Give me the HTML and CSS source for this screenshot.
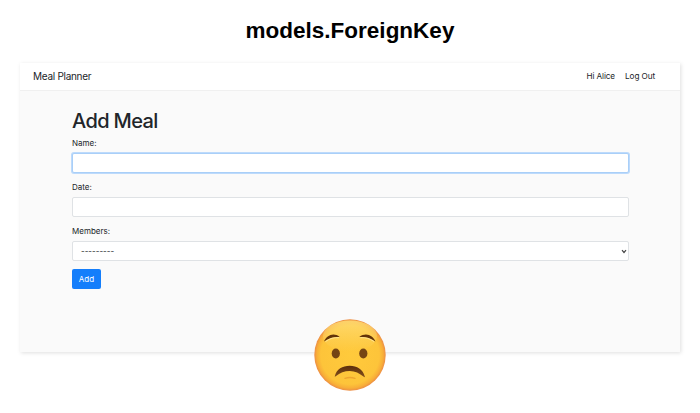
FILE: index.html
```html
<!DOCTYPE html>
<html lang="en">
<head>
<meta charset="utf-8">
<title>models.ForeignKey</title>
<link rel="stylesheet" href="styles.css">
</head>
<body>
<h1 class="slide-title"><span>models.ForeignKey</span></h1>
<main class="window">
  <nav class="navbar">
    <span class="brand">Meal Planner</span>
    <span class="greeting">Hi Alice</span>
    <span class="logout">Log Out</span>
  </nav>
  <form class="form">
    <h2 class="heading"><span>Add Meal</span></h2>
    <label class="label" for="name"><span>Name:</span></label>
    <input class="control focused" id="name" type="text">
    <label class="label" for="date"><span>Date:</span></label>
    <input class="control" id="date" type="text">
    <label class="label" for="members"><span>Members:</span></label>
    <div class="control select" id="members">
      <span>---------</span>
      <svg class="chevron" viewBox="0 0 6 5"><path d="M1 1.2 3 3.5 5 1.2" fill="none" stroke="#444" stroke-width="1.2"/></svg>
    </div>
    <button class="button" type="button">Add</button>
  </form>
</main>
<svg class="emoji" viewBox="0 0 72 72">
  <defs>
    <radialGradient id="face" cx=".5" cy=".5" r=".5">
      <stop offset="0" stop-color="#ffca3c"/>
      <stop offset=".82" stop-color="#fdc43a"/>
      <stop offset=".93" stop-color="#f8ae38"/>
      <stop offset="1" stop-color="#ec8d45"/>
    </radialGradient>
    <linearGradient id="shine" x1="0" y1="0" x2="0" y2="1">
      <stop offset="0" stop-color="#ffe07c" stop-opacity=".75"/>
      <stop offset="1" stop-color="#ffdf75" stop-opacity="0"/>
    </linearGradient>
    <linearGradient id="mouth" x1="0" y1="0" x2="0" y2="1">
      <stop offset="0" stop-color="#5a2d0c"/>
      <stop offset="1" stop-color="#84501a"/>
    </linearGradient>
  </defs>
  <circle cx="36" cy="36" r="35.7" fill="url(#face)"/>
  <ellipse cx="36" cy="17" rx="27" ry="15.5" fill="url(#shine)"/>
  <path d="M10 22.500C12.500 16.500 19.500 13 25.700 18C20 17.500 15.500 18.800 10 22.500Z" fill="#623309"/>
  <path d="M61.500 22.500C59 16.500 52 13 45.300 18C51.500 17.500 56 18.800 61.500 22.500Z" fill="#623309"/>
  <path d="M11.500 22.500C16 19.300 20 18.300 25 18.700M60 22.500C55.500 19.300 51.500 18.300 46.500 18.700" fill="none" stroke="#fff0b0" stroke-width=".7"/>
  <ellipse cx="21.800" cy="34.500" rx="4.100" ry="4.900" fill="#754514"/>
  <ellipse cx="49.300" cy="34.500" rx="4.100" ry="4.900" fill="#754514"/>
  <path d="M20.800 57.300C22.500 50 28.500 46.700 35.700 46.700C43 46.700 49 50.200 50.800 57.600C51 58.300 50.500 58.500 49.800 57.800C45.500 54.300 41 52 35.700 52C30.500 52 26 53.700 21.700 57.200C21 57.800 20.700 57.900 20.800 57.300Z" fill="url(#mouth)"/>
  <path d="M31 59.300Q36 57.800 41 59.300" fill="none" stroke="#eea52f" stroke-width="1.400" stroke-linecap="round"/>
</svg>
</body>
</html>
```
FILE: styles.css
```css
* { box-sizing: border-box; }
body {
  margin: 0;
  height: 413px;
  overflow: hidden;
  background: #fff;
  color: #212529;
  font-family: Inter, "Liberation Sans", sans-serif;
  position: relative;
}
.slide-title {
  margin: 0;
  height: 63px;
  padding-top: 17px;
  text-align: center;
  font: bold 22.5px/28px "Liberation Sans", sans-serif;
  color: #000;
}
.window {
  width: 660px;
  height: 289px;
  margin: 0 auto;
  background: #fafafa;
  box-shadow: 1px 1px 4px rgba(0, 0, 0, .13);
}
.navbar {
  display: flex;
  align-items: center;
  height: 28px;
  padding: 0 25px 1px 13px;
  background: #fff;
  border-bottom: 1px solid #f0f0f0;
  font-size: 8.2px;
  letter-spacing: -.1px;
}
.brand { margin-right: auto; font-size: 10px; letter-spacing: -.28px; }
.greeting { margin-right: 10px; }
.form {
  display: flex;
  flex-direction: column;
  align-items: flex-start;
  width: 557px;
  margin-left: 52px;
  padding-top: 18px;
}
.heading {
  margin: 0 0 3px;
  font-size: 20px;
  line-height: 25px;
  font-weight: 500;
  letter-spacing: -.62px;
}
.label {
  height: 12px;
  margin-bottom: 4px;
  font-size: 8px;
  line-height: 12px;
}
.control {
  width: 557px;
  height: 20px;
  margin: 0 0 8px;
  padding: 0 8px;
  border: 1px solid #dfe2e5;
  border-radius: 2px;
  background: #fff;
  outline: none;
  font: 8px Inter, sans-serif;
}
.focused { border-color: #a9cff8; box-shadow: 0 0 0 1px #bddafb; }
.select {
  display: flex;
  align-items: center;
  justify-content: space-between;
  padding-right: 1px;
}
.chevron { width: 6px; height: 5px; }
.button {
  width: 29px;
  height: 20px;
  padding: 0;
  border: 0;
  border-radius: 2px;
  background: #147efb;
  color: #fff;
  font: 8px Inter, sans-serif;
}
.emoji {
  position: absolute;
  left: 314px;
  top: 319px;
  width: 72px;
  height: 72px;
}
```
